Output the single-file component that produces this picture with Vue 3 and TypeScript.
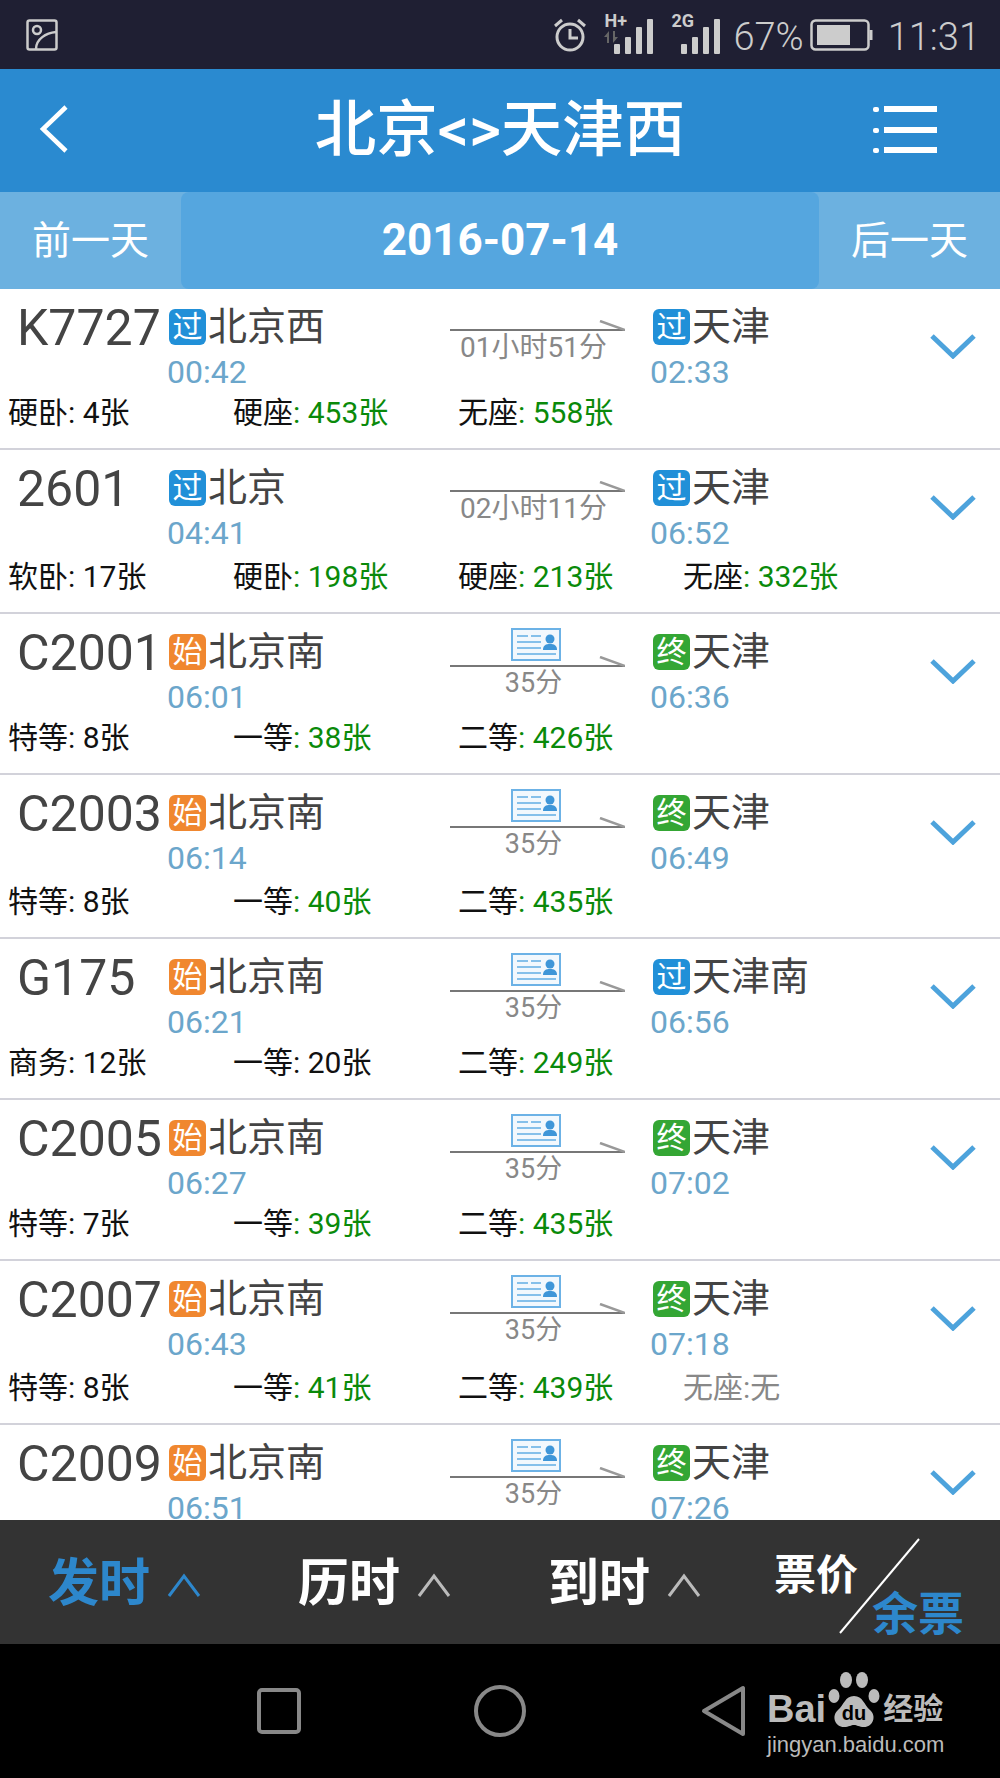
<script setup lang="ts">
type StopType = '过' | '始' | '终';

interface Ticket {
	name: string;
	count: number | null; // null = 无
}

interface Train {
	no: string;
	depType: StopType;
	dep: string;
	depTime: string;
	duration: string;
	idCard: boolean; // 身份证图标
	arrType: StopType;
	arr: string;
	arrTime: string;
	tickets: Ticket[];
	height: number;
}

const t = (name: string, count: number | null): Ticket => ({ name, count });

const trains: Train[] = [
	{ no: 'K7727', depType: '过', dep: '北京西', depTime: '00:42', duration: '01小时51分', idCard: false, arrType: '过', arr: '天津', arrTime: '02:33', tickets: [t('硬卧', 4), t('硬座', 453), t('无座', 558)], height: 161 },
	{ no: '2601', depType: '过', dep: '北京', depTime: '04:41', duration: '02小时11分', idCard: false, arrType: '过', arr: '天津', arrTime: '06:52', tickets: [t('软卧', 17), t('硬卧', 198), t('硬座', 213), t('无座', 332)], height: 164 },
	{ no: 'C2001', depType: '始', dep: '北京南', depTime: '06:01', duration: '35分', idCard: true, arrType: '终', arr: '天津', arrTime: '06:36', tickets: [t('特等', 8), t('一等', 38), t('二等', 426)], height: 161 },
	{ no: 'C2003', depType: '始', dep: '北京南', depTime: '06:14', duration: '35分', idCard: true, arrType: '终', arr: '天津', arrTime: '06:49', tickets: [t('特等', 8), t('一等', 40), t('二等', 435)], height: 164 },
	{ no: 'G175', depType: '始', dep: '北京南', depTime: '06:21', duration: '35分', idCard: true, arrType: '过', arr: '天津南', arrTime: '06:56', tickets: [t('商务', 12), t('一等', 20), t('二等', 249)], height: 161 },
	{ no: 'C2005', depType: '始', dep: '北京南', depTime: '06:27', duration: '35分', idCard: true, arrType: '终', arr: '天津', arrTime: '07:02', tickets: [t('特等', 7), t('一等', 39), t('二等', 435)], height: 161 },
	{ no: 'C2007', depType: '始', dep: '北京南', depTime: '06:43', duration: '35分', idCard: true, arrType: '终', arr: '天津', arrTime: '07:18', tickets: [t('特等', 8), t('一等', 41), t('二等', 439), t('无座', null)], height: 164 },
	{ no: 'C2009', depType: '始', dep: '北京南', depTime: '06:51', duration: '35分', idCard: true, arrType: '终', arr: '天津', arrTime: '07:26', tickets: [], height: 164 },
];

const sorts = [
	{ label: '发时', active: true },
	{ label: '历时', active: false },
	{ label: '到时', active: false },
];

const badgeClass = (type: StopType): string => {
	if (type === '始') return 'badge--start';
	if (type === '终') return 'badge--end';
	return 'badge--pass';
};

const signalBars = [
	{ x: 0, h: 10 },
	{ x: 11, h: 17 },
	{ x: 22, h: 27 },
	{ x: 33, h: 35 },
];
</script>

<template>
	<div class="phone">
		<div class="status">
			<svg class="status__pic" width="32" height="32" viewBox="0 0 32 32" fill="none" stroke="#ccc" stroke-width="2.5">
				<rect x="1.5" y="1.5" width="29" height="29" rx="2" />
				<circle cx="11" cy="11" r="4" />
				<path d="M10 30C10 20 20 14 30 13" />
			</svg>
			<div class="status__right">
				<svg width="34" height="36" viewBox="0 0 34 36" fill="none" stroke="#ccc" stroke-width="3">
					<circle cx="17" cy="20" r="13" />
					<path d="M17 12V21H25" />
					<path d="M2 9L9 3M32 9L25 3" />
				</svg>
				<div class="net">
					<span class="net__tag">H+</span>
					<svg class="net__updown" width="16" height="12" viewBox="0 0 16 12" fill="#666">
						<path d="M1 6L6 0V12H4V6ZM15 6L10 12V0H12V6Z" />
					</svg>
					<svg width="40" height="36" viewBox="0 0 40 36" fill="#ccc">
						<rect v-for="b in signalBars" :key="b.x" :x="b.x + 1" :y="36 - b.h" width="6" :height="b.h" rx="1" />
					</svg>
				</div>
				<div class="net net--second">
					<span class="net__tag">2G</span>
					<svg width="40" height="36" viewBox="0 0 40 36" fill="#ccc">
						<rect v-for="b in signalBars" :key="b.x" :x="b.x + 1" :y="36 - b.h" width="6" :height="b.h" rx="1" />
					</svg>
				</div>
				<span class="status__text status__pct">67%</span>
				<svg width="64" height="32" viewBox="0 0 64 32" fill="none">
					<rect x="1.5" y="1.5" width="57" height="29" rx="4" stroke="#ccc" stroke-width="2.5" />
					<rect x="7" y="6" width="33" height="20" fill="#ccc" />
					<path d="M61 11V21" stroke="#ccc" stroke-width="3" />
				</svg>
				<span class="status__text status__time">11:31</span>
			</div>
		</div>

		<header class="head">
			<svg class="head__back" width="30" height="48" viewBox="0 0 30 48" fill="none" stroke="#fff" stroke-width="4.5">
				<path d="M27 2L4 24L27 46" />
			</svg>
			<h1 class="head__ttl">北京&lt;&gt;天津西</h1>
			<svg class="head__menu" width="66" height="48" viewBox="0 0 66 48" fill="#fff">
				<rect x="0" y="2" width="6" height="5" rx="2" />
				<rect x="0" y="23" width="6" height="5" rx="2" />
				<rect x="0" y="43" width="6" height="5" rx="2" />
				<rect x="11" y="1" width="53" height="6" />
				<rect x="11" y="22" width="53" height="6" />
				<rect x="11" y="42" width="53" height="6" />
			</svg>
		</header>

		<nav class="dateBar">
			<span class="dateBar__btn">前一天</span>
			<span class="dateBar__date">2016-07-14</span>
			<span class="dateBar__btn">后一天</span>
		</nav>

		<ul class="list">
			<li v-for="train in trains" :key="train.no" class="train" :style="{ height: train.height + 'px' }">
				<div class="train__top">
					<span class="train__no">{{ train.no }}</span>
					<div class="stop stop--dep">
						<div class="stop__name">
							<span class="badge" :class="badgeClass(train.depType)">{{ train.depType }}</span>{{ train.dep }}
						</div>
						<div class="stop__time">{{ train.depTime }}</div>
					</div>
					<div class="mid" :class="{ 'mid--id': train.idCard }">
						<svg v-if="train.idCard" class="mid__card" width="50" height="33" viewBox="0 0 50 33">
							<rect x="1" y="1" width="48" height="31" fill="#f2f8fd" stroke="#6cb2e6" stroke-width="2" />
							<path d="M6 8H17M20 8H30M6 14H30M6 20H30M6 26H45" stroke="#62ade4" stroke-width="1.6" fill="none" />
							<circle cx="39" cy="11" r="4.5" fill="#3f96d8" />
							<path d="M32 22C32 17 35 16 39 16C43 16 46 17 46 22Z" fill="#3f96d8" />
						</svg>
						<svg class="mid__arrow" width="175" height="11" viewBox="0 0 175 11" fill="none">
							<path d="M0 10H175" stroke="#777" stroke-width="2" />
							<path d="M150 1L175 10" stroke="#999" stroke-width="2.5" />
						</svg>
						<span class="mid__dur">{{ train.duration }}</span>
					</div>
					<div class="stop stop--arr">
						<div class="stop__name">
							<span class="badge" :class="badgeClass(train.arrType)">{{ train.arrType }}</span>{{ train.arr }}
						</div>
						<div class="stop__time">{{ train.arrTime }}</div>
					</div>
					<svg class="train__open" width="46" height="26" viewBox="0 0 46 26" fill="none" stroke="#4da3dc" stroke-width="5">
						<path d="M2 3L23 23L44 3" />
					</svg>
				</div>
				<div class="tickets">
					<span v-for="item in train.tickets" :key="item.name" class="ticket" :class="{ 'ticket--none': item.count === null }">
						<template v-if="item.count === null">{{ item.name }}:无</template>
						<template v-else>
							{{ item.name }}<span :class="{ 'ticket__many': item.count > 20 }">: {{ item.count }}张</span>
						</template>
					</span>
				</div>
			</li>
		</ul>

		<div class="sortBar">
			<div v-for="s in sorts" :key="s.label" class="sortBar__item" :class="{ '-active': s.active }">
				<span>{{ s.label }}</span>
				<svg width="34" height="24" viewBox="0 0 34 24" fill="none" stroke="currentColor" stroke-width="3">
					<path d="M2 23L17 3L32 23" />
				</svg>
			</div>
			<div class="sortBar__split">
				<span class="sortBar__price">票价</span>
				<svg class="sortBar__slash" width="82" height="96" viewBox="0 0 82 96">
					<path d="M80 1L1 95" stroke="#fff" stroke-width="2" />
				</svg>
				<span class="sortBar__left">余票</span>
			</div>
		</div>

		<div class="navBar">
			<svg class="navBar__icon" width="46" height="48" viewBox="0 0 46 48" fill="none" stroke="#888" stroke-width="4">
				<rect x="3" y="3" width="40" height="42" rx="3" />
			</svg>
			<svg class="navBar__icon" width="54" height="54" viewBox="0 0 54 54" fill="none" stroke="#888" stroke-width="4">
				<circle cx="27" cy="27" r="24" />
			</svg>
			<svg class="navBar__icon" width="46" height="52" viewBox="0 0 46 52" fill="none" stroke="#888" stroke-width="4" stroke-linejoin="round">
				<path d="M42 3V49L3 26Z" />
			</svg>
			<div class="mark">
				<div class="mark__logo">
					<span class="mark__bai">Bai</span>
					<svg class="mark__paw" width="52" height="56" viewBox="0 0 52 56" fill="#bbb">
						<ellipse cx="6" cy="24" rx="5.5" ry="7" />
						<ellipse cx="18" cy="8" rx="6" ry="8" />
						<ellipse cx="34" cy="8" rx="6" ry="8" />
						<ellipse cx="46" cy="24" rx="5.5" ry="7" />
						<path d="M26 24C35 24 36 33 42 38C49 44 45 55 36 55C31 55 29 53 26 53C23 53 21 55 16 55C7 55 3 44 10 38C16 33 17 24 26 24Z" />
						<text x="26" y="48" text-anchor="middle" class="mark__du">du</text>
					</svg>
					<span class="mark__jy">经验</span>
				</div>
				<div class="mark__url">jingyan.baidu.com</div>
			</div>
		</div>
	</div>
</template>

<style scoped>
.phone {
	position: relative;
	width: 1000px;
	height: 1778px;
	display: flex;
	flex-direction: column;
	overflow: hidden;
	background: #000;
	font-family: Roboto, "Noto Sans CJK SC", sans-serif;
}

/* ------ status */

.status {
	height: 69px;
	flex-shrink: 0;
	display: flex;
	align-items: center;
	justify-content: space-between;
	padding: 0 20px 0 26px;
	background: #1f1f33;
	box-sizing: border-box;
}

.status__pic {
	margin-top: 1px;
}

.status__right {
	display: flex;
	align-items: center;
}

.status__text {
	color: #ccc;
	font-size: 38px;
	font-weight: 300;
	line-height: 1;
	margin-top: 4px;
}

.status__pct {
	margin-left: 13px;
	margin-right: 6px;
}

.status__time {
	margin-left: 14px;
}

.net {
	position: relative;
	margin-left: 26px;
	height: 36px;
	margin-top: 2px;
}

.net--second {
	margin-left: 27px;
}

.net__tag {
	position: absolute;
	left: -9px;
	top: -6px;
	color: #ccc;
	font-size: 18px;
	font-weight: 700;
	line-height: 1;
}

.net__updown {
	position: absolute;
	left: -10px;
	top: 13px;
}

/* ------ header */

.head {
	height: 123px;
	flex-shrink: 0;
	display: grid;
	grid-template-columns: 1fr auto 1fr;
	align-items: center;
	background: #2a8ad0;
}

.head__ttl {
	margin: 0;
	color: #fff;
	font-size: 61.5px;
	font-weight: 500;
	line-height: 1.2;
}

.head__back {
	margin: -3px 0 0 39px;
}

.head__menu {
	justify-self: end;
	margin: -3px 61px 0 0;
}

.dateBar {
	height: 97px;
	flex-shrink: 0;
	display: flex;
	background: #6cb1e0;
}

.dateBar__btn {
	width: 181px;
	display: flex;
	align-items: center;
	justify-content: center;
	color: #fff;
	font-size: 39px;
	padding-bottom: 8px;
	box-sizing: border-box;
}

.dateBar__date {
	flex: 1;
	display: flex;
	align-items: center;
	justify-content: center;
	border-radius: 8px;
	background: #55a6df;
	color: #fff;
	font-size: 44px;
	font-weight: 700;
	padding-bottom: 2px;
}

/* ------ list */

.list {
	flex: 1;
	min-height: 0;
	margin: 0;
	padding: 0;
	list-style: none;
	overflow: hidden;
	background: #fff;
}

.train {
	display: flex;
	flex-direction: column;
	justify-content: space-between;
	box-sizing: border-box;
	border-bottom: 2px solid #d2d2da;
	padding: 20px 0 17px;
}

.train__top {
	display: flex;
	align-items: flex-start;
	padding-left: 17px;
}

.train__no {
	width: 152px;
	flex-shrink: 0;
	color: #444;
	font-size: 50px;
	line-height: 38px;
}

.stop {
	flex-shrink: 0;
}

.stop--dep {
	width: 281px;
}

.stop--arr {
	width: 277px;
	margin-left: 28px;
}

.stop--arr .stop__time {
	margin-left: -3px;
}

.stop__name {
	display: flex;
	align-items: center;
	color: #444;
	font-size: 39px;
	line-height: 36px;
}

.badge {
	width: 37px;
	height: 36px;
	margin-right: 2px;
	display: flex;
	align-items: center;
	justify-content: center;
	border-radius: 6px;
	color: #fff;
	font-size: 30px;
	line-height: 1;
}

.badge--pass {
	background: #2190d8;
}

.badge--start {
	background: #f0872f;
}

.badge--end {
	background: #34a634;
}

.stop__time {
	margin-top: 8px;
	margin-left: -2px;
	color: #6ba6cb;
	font-size: 32px;
	line-height: 38px;
}

.mid {
	width: 175px;
	flex-shrink: 0;
	display: flex;
	flex-direction: column;
	align-items: center;
	padding-top: 11px;
}

.mid--id {
	margin-top: -6px;
	padding-top: 0;
}

.mid__card {
	display: block;
	margin: 0 0 -5px -4px;
}

.mid__arrow {
	display: block;
}

.mid__dur {
	margin-left: -8px;
	color: #888;
	font-size: 28px;
	line-height: 34px;
}

.mid--id .mid__dur {
	margin-top: -1px;
	font-size: 27px;
}

.train__open {
	flex-shrink: 0;
	margin-top: 24px;
}

.tickets {
	display: flex;
	padding-left: 8px;
}

.ticket {
	width: 225px;
	flex-shrink: 0;
	color: #111;
	font-size: 30px;
	line-height: 36px;
	white-space: nowrap;
}

.ticket--none {
	color: #888;
}

.ticket__many {
	color: #0a8a0a;
}

/* ------ sort */

.sortBar {
	height: 124px;
	flex-shrink: 0;
	display: flex;
	align-items: center;
	padding-left: 48px;
	background: #333;
	color: #fff;
	box-sizing: border-box;
}

.sortBar__item {
	width: 250px;
	display: flex;
	align-items: center;
	gap: 17px;
	font-size: 51px;
	font-weight: 700;
	line-height: 1;
	padding-top: 2px;
	box-sizing: border-box;
}

.sortBar__item svg {
	color: #bbb;
	margin-top: 4px;
}

.sortBar__item.-active,
.sortBar__item.-active svg {
	color: #2d87cc;
}

.sortBar__split {
	position: relative;
	width: 190px;
	height: 124px;
	margin-left: -24px;
}

.sortBar__price {
	position: absolute;
	left: 0;
	top: 35px;
	font-size: 42px;
	font-weight: 700;
	line-height: 1;
}

.sortBar__left {
	position: absolute;
	right: 0;
	top: 71px;
	color: #2d87cc;
	font-size: 46px;
	font-weight: 700;
	line-height: 1;
}

.sortBar__slash {
	position: absolute;
	left: 65px;
	top: 18px;
}

/* ------ nav */

.navBar {
	position: relative;
	height: 134px;
	flex-shrink: 0;
	display: flex;
	align-items: center;
	background: #000;
	padding: 0 0 0 256px;
	box-sizing: border-box;
}

.navBar__icon:nth-child(2) {
	margin-left: 171px;
}

.navBar__icon:nth-child(3) {
	margin-left: 174px;
}

.mark {
	position: absolute;
	left: 767px;
	top: 26px;
	width: 200px;
	color: #bbb;
}

.mark__logo {
	display: flex;
	align-items: flex-end;
	height: 58px;
}

.mark__bai {
	font-family: "Liberation Sans", sans-serif;
	font-size: 38px;
	font-weight: 700;
	line-height: 38px;
}

.mark__paw {
	margin-left: 2px;
}

.mark__du {
	font-family: "Liberation Sans", sans-serif;
	font-size: 20px;
	font-weight: 700;
	fill: #000;
}

.mark__jy {
	margin-left: 3px;
	font-size: 30px;
	font-weight: 700;
	line-height: 38px;
}

.mark__url {
	font-family: "Liberation Sans", sans-serif;
	font-size: 22px;
	line-height: 26px;
	margin-top: 4px;
}
</style>
